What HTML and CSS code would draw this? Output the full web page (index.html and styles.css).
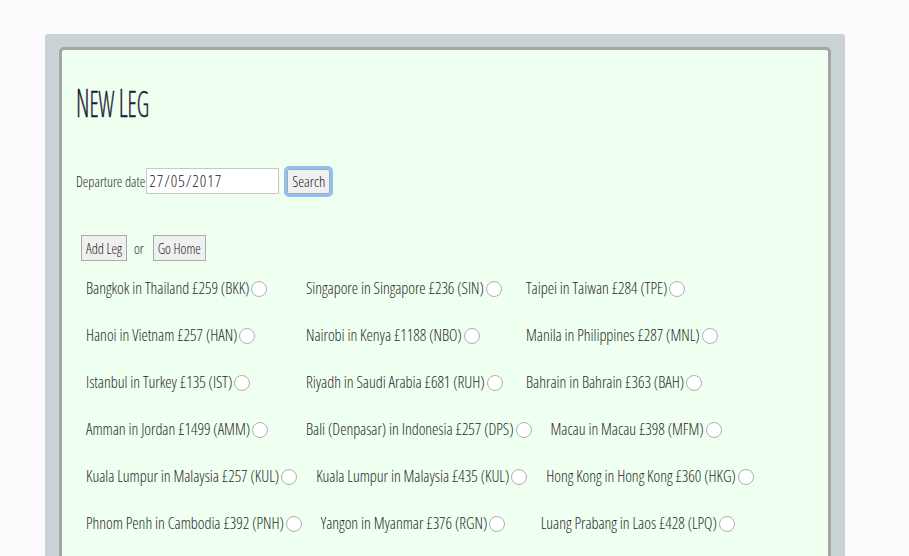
FILE: index.html
```html
<!DOCTYPE html>
<html>
<head>
<meta charset="utf-8">
<title>New Leg</title>
<link rel="stylesheet" href="styles.css">
</head>
<body>
<div class="frame">
  <div class="panel">
    <h1 class="title"><span class="word">New</span> <span class="word">Leg</span></h1>
    <form class="search-row">
      <label class="date-label" for="dep">Departure date</label><input class="date-input" id="dep" type="text" value="27/05/2017"><button type="button" class="btn btn-focus">Search</button>
    </form>
    <div class="actions">
      <button type="button" class="btn">Add Leg</button>
      <span class="or">or</span>
      <button type="button" class="btn">Go Home</button>
    </div>
    <div class="options">
      <label class="opt">Bangkok in Thailand £259 (BKK)<input type="radio" name="leg"></label>
      <label class="opt">Singapore in Singapore £236 (SIN)<input type="radio" name="leg"></label>
      <label class="opt">Taipei in Taiwan £284 (TPE)<input type="radio" name="leg"></label>
      <label class="opt">Hanoi in Vietnam £257 (HAN)<input type="radio" name="leg"></label>
      <label class="opt">Nairobi in Kenya £1188 (NBO)<input type="radio" name="leg"></label>
      <label class="opt">Manila in Philippines £287 (MNL)<input type="radio" name="leg"></label>
      <label class="opt">Istanbul in Turkey £135 (IST)<input type="radio" name="leg"></label>
      <label class="opt">Riyadh in Saudi Arabia £681 (RUH)<input type="radio" name="leg"></label>
      <label class="opt">Bahrain in Bahrain £363 (BAH)<input type="radio" name="leg"></label>
      <label class="opt">Amman in Jordan £1499 (AMM)<input type="radio" name="leg"></label>
      <label class="opt">Bali (Denpasar) in Indonesia £257 (DPS)<input type="radio" name="leg"></label>
      <label class="opt">Macau in Macau £398 (MFM)<input type="radio" name="leg"></label>
      <label class="opt">Kuala Lumpur in Malaysia £257 (KUL)<input type="radio" name="leg"></label>
      <label class="opt">Kuala Lumpur in Malaysia £435 (KUL)<input type="radio" name="leg"></label>
      <label class="opt">Hong Kong in Hong Kong £360 (HKG)<input type="radio" name="leg"></label>
      <label class="opt">Phnom Penh in Cambodia £392 (PNH)<input type="radio" name="leg"></label>
      <label class="opt">Yangon in Myanmar £376 (RGN)<input type="radio" name="leg"></label>
      <label class="opt">Luang Prabang in Laos £428 (LPQ)<input type="radio" name="leg"></label>
    </div>
  </div>
</div>
</body>
</html>
```
FILE: styles.css
```css
html, body {
  margin: 0;
  padding: 0;
  background: #fcfafc;
}
body {
  font-family: "Open Sans", "Liberation Sans", sans-serif;
  font-stretch: 75%;
  font-weight: 300;
  color: #2a2a2a;
  overflow: hidden;
  height: 556px;
}
.frame {
  margin: 34px 0 0 45px;
  width: 772px;
  padding: 13px 14px 40px 14px;
  background: #c9d3d6;
  border-radius: 3px 3px 0 0;
}
.panel {
  border: 3px solid #a5a5a5;
  border-radius: 5px;
  background: #effff0;
  padding: 0 14px 60px 14px;
  min-height: 600px;
}
.title {
  margin: 32px 0 0 0;
  font-family: "Open Sans", sans-serif;
  font-stretch: 75%;
  font-weight: 300;
  text-transform: uppercase;
  font-size: 36px;
  line-height: 40px;
  height: 40px;
  color: #1d1d35;
  -webkit-text-stroke: 0.4px #1d1d35;
  display: inline-block;
  white-space: nowrap;
  transform: scaleX(0.65);
  transform-origin: left center;
}
.word {
  display: inline-block;
}
.word::first-letter {
  font-size: 39px;
}
.search-row {
  display: flex;
  align-items: center;
  margin-top: 46px;
}
.date-label {
  font-size: 14px;
  font-weight: 300;
}
.date-input {
  width: 127px;
  height: 22px;
  padding: 1px 2px;
  border: 1px solid #c8c8c8;
  font-family: "Open Sans", sans-serif;
  font-stretch: 75%;
  font-weight: 300;
  font-size: 16px;
  letter-spacing: 1px;
  color: #222;
  background: #fff;
  margin: 0 8px 0 1px;
}
.btn {
  font-family: "Open Sans", sans-serif;
  font-stretch: 75%;
  font-weight: 300;
  font-size: 14px;
  color: #222;
  background: #f0f0f0;
  border: 1px solid #a9a9a9;
  height: 26px;
  padding: 0 4px;
  border-radius: 0;
}
.btn-focus {
  height: 25px;
  font-size: 15px;
  outline: 3px solid #8dc1f2;
  outline-offset: 0;
  border-radius: 2px;
}
.actions {
  display: flex;
  align-items: center;
  gap: 7px;
  margin: 41px 0 0 5px;
}
.or {
  font-size: 14px;
  padding-right: 2px;
}
.options {
  display: flex;
  flex-wrap: wrap;
  column-gap: 16px;
  margin: 3px 0 0 10px;
}
.opt {
  min-width: 204px;
  height: 47px;
  display: flex;
  align-items: center;
  font-size: 16px;
  letter-spacing: -0.05px;
}
.opt input {
  appearance: none;
  -webkit-appearance: none;
  margin: 2px 3px 0 2px;
  width: 16px;
  height: 16px;
  border: 1px solid #b0b0b0;
  border-radius: 50%;
  background: #fff;
  box-sizing: border-box;
}
```
